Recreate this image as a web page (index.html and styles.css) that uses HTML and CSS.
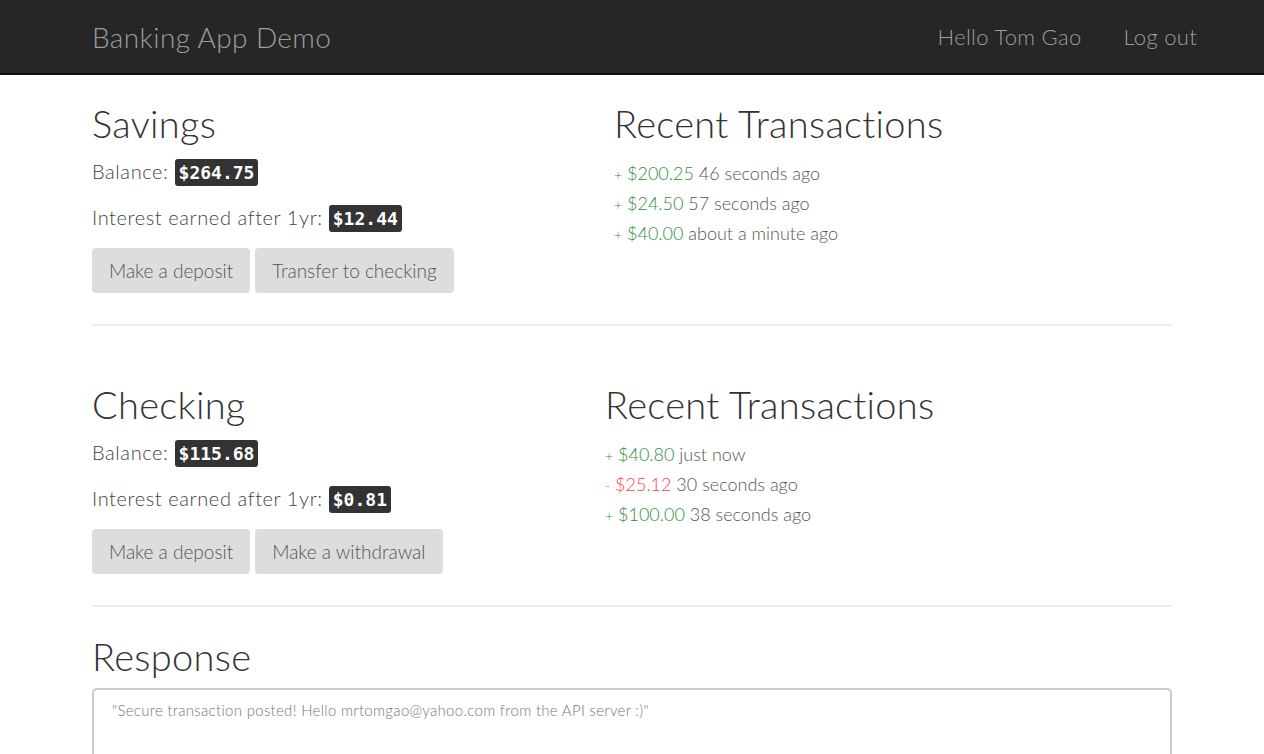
FILE: index.html
```html
<!DOCTYPE html>
<html lang="en">
<head>
<meta charset="utf-8">
<title>Banking App Demo</title>
<link rel="stylesheet" href="styles.css">
</head>
<body>
<nav class="navbar">
  <a class="brand" href="#">Banking App Demo</a>
  <div class="nav-links">
    <a href="#">Hello Tom Gao</a>
    <a href="#">Log out</a>
  </div>
</nav>
<main class="container">
  <section class="account account-savings">
    <div class="col">
      <h1>Savings</h1>
      <p>Balance: <kbd>$264.75</kbd></p>
      <p>Interest earned after 1yr: <kbd>$12.44</kbd></p>
      <div class="actions">
        <button class="btn">Make a deposit</button>
        <button class="btn">Transfer to checking</button>
      </div>
    </div>
    <div class="col">
      <h1>Recent Transactions</h1>
      <ul class="tx">
        <li><span class="sign plus">+</span> <span class="amt plus">$200.25</span> 46 seconds ago</li>
        <li><span class="sign plus">+</span> <span class="amt plus">$24.50</span> 57 seconds ago</li>
        <li><span class="sign plus">+</span> <span class="amt plus">$40.00</span> about a minute ago</li>
      </ul>
    </div>
  </section>
  <hr>
  <section class="account account-checking">
    <div class="col">
      <h1>Checking</h1>
      <p>Balance: <kbd>$115.68</kbd></p>
      <p>Interest earned after 1yr: <kbd>$0.81</kbd></p>
      <div class="actions">
        <button class="btn">Make a deposit</button>
        <button class="btn">Make a withdrawal</button>
      </div>
    </div>
    <div class="col">
      <h1>Recent Transactions</h1>
      <ul class="tx">
        <li><span class="sign plus">+</span> <span class="amt plus">$40.80</span> just now</li>
        <li><span class="sign minus">-</span> <span class="amt minus">$25.12</span> 30 seconds ago</li>
        <li><span class="sign plus">+</span> <span class="amt plus">$100.00</span> 38 seconds ago</li>
      </ul>
    </div>
  </section>
  <hr>
  <section class="response">
    <h1>Response</h1>
    <div class="response-box">"Secure transaction posted! Hello mrtomgao@yahoo.com from the API server :)"</div>
  </section>
</main>
</body>
</html>
```
FILE: styles.css
```css
* { box-sizing: border-box; }
html, body { margin: 0; padding: 0; }
body {
  font-family: Lato, "Noto Sans", sans-serif;
  font-weight: 300;
  color: #444;
  background: #fff;
  font-size: 20px;
  overflow: hidden;
}
a { text-decoration: none; }

.navbar {
  height: 75px;
  background: #262626;
  border-bottom: 2px solid #0d0d0d;
  display: flex;
  align-items: center;
  justify-content: space-between;
  padding: 0 67px 0 92px;
}
.brand {
  color: #9d9d9d;
  font-size: 28px;
  letter-spacing: 0.4px;
}
.nav-links {
  display: flex;
  gap: 42px;
}
.nav-links a {
  color: #9d9d9d;
  font-size: 22px;
  letter-spacing: 0.3px;
}

.container {
  width: 1080px;
  margin: 0 auto;
}

.account {
  display: grid;
  grid-template-columns: 522px 1fr;
}
.account-checking {
  grid-template-columns: 513px 1fr;
}

h1 {
  font-weight: 300;
  font-size: 38px;
  line-height: 42px;
  margin: 0;
  color: #333;
  letter-spacing: 0.3px;
}
.account h1 {
  margin: 27px 0 12px;
}
.account-checking h1 { margin-top: 57px; }

p {
  margin: 0 0 14px;
  line-height: 30px;
  color: #444;
  letter-spacing: 0.6px;
}
kbd {
  font-family: "DejaVu Sans Mono", monospace;
  font-weight: bold;
  font-size: 18px;
  letter-spacing: 0;
  color: #fff;
  background: #333;
  border-radius: 3px;
  padding: 3px 4px;
}

.actions {
  display: flex;
  gap: 5px;
}
.btn {
  font-family: inherit;
  font-weight: 300;
  font-size: 19px;
  color: #555;
  background: #ddd;
  border: none;
  border-radius: 4px;
  height: 45px;
  padding: 0 17px;
}

.tx {
  list-style: none;
  margin: 0;
  padding: 2px 0 0;
}
.tx li {
  line-height: 30px;
  height: 30px;
  font-size: 18px;
  color: #555;
}
.sign { font-size: 14px; line-height: 1; }
.plus { color: #2f8f3c; }
.minus { color: #ff3d50; }

hr {
  border: 0;
  border-top: 2px solid #eee;
  margin: 31px 0 0;
}

.response h1 {
  margin: 28px 0 11px;
}
.response-box {
  border: 2px solid #ccc;
  border-radius: 5px;
  height: 120px;
  padding: 11px 18px;
  font-size: 15px;
  letter-spacing: 0.3px;
  color: #777;
}
```
